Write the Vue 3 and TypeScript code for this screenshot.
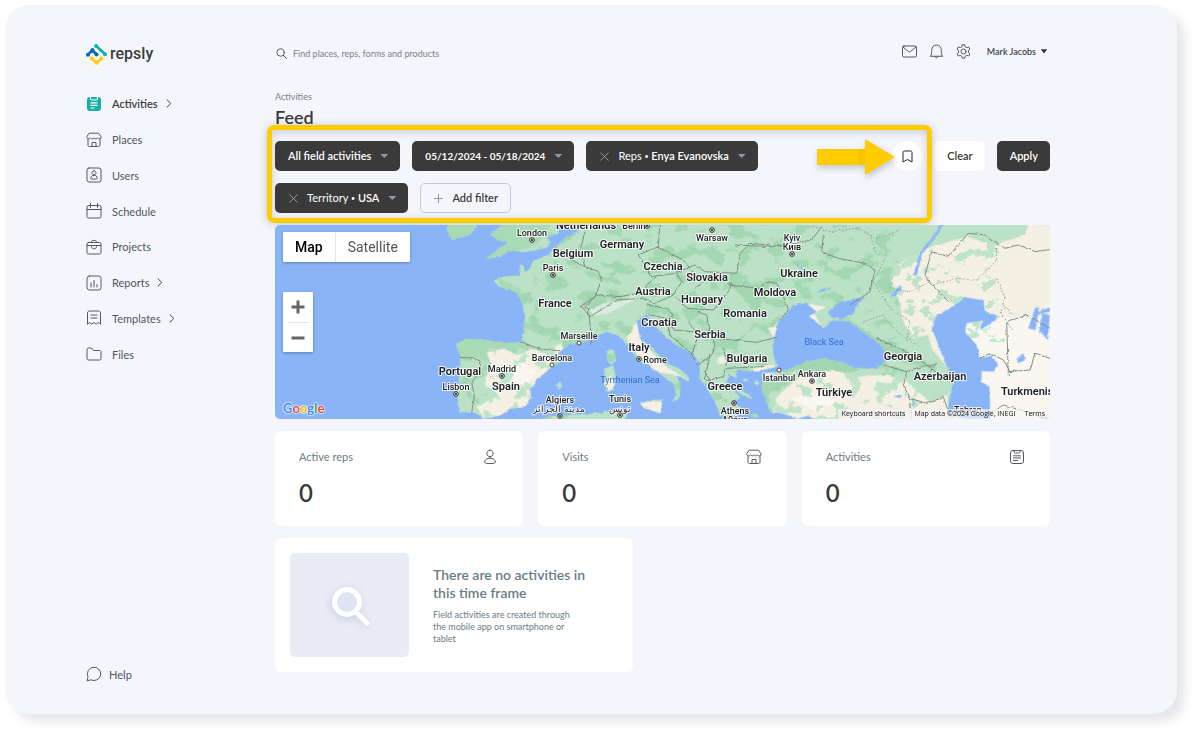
<script setup lang="ts">
import { ref } from 'vue'

interface NavItem {
  label: string
  icon: string
  expandable?: boolean
  active?: boolean
}

interface MapLabel {
  text: string
  x: number
  y: number
  kind: 'country' | 'city' | 'sea'
}

const nav: NavItem[] = [
  { label: 'Activities', icon: 'clipboard-solid', expandable: true, active: true },
  { label: 'Places', icon: 'store' },
  { label: 'Users', icon: 'badge' },
  { label: 'Schedule', icon: 'calendar' },
  { label: 'Projects', icon: 'case' },
  { label: 'Reports', icon: 'chart', expandable: true },
  { label: 'Templates', icon: 'template', expandable: true },
  { label: 'Files', icon: 'folder' },
]

const icons: Record<string, string> = {
  store:
    'M3.500 1.200h9L15.200 5c.3 2-2.800 2.500-3.800.8-.7 1.400-2.800 1.400-3.400 0-.6 1.400-2.700 1.400-3.400 0C3.600 7.500.5 7 .8 5zM2 7.200v5.800c0 .9.600 1.500 1.500 1.500h9c.9 0 1.500-.6 1.500-1.500V7.200M6 14.500V10.500h4v4',
  badge:
    'M3 1h10a2 2 0 0 1 2 2v10a2 2 0 0 1-2 2H3a2 2 0 0 1-2-2V3a2 2 0 0 1 2-2zM8 3.800a2 2 0 1 0 .01 0zM8 8c-2 0-3.300 1.800-3.300 3.500 0 .8 6.600.8 6.600 0C11.300 9.800 10 8 8 8z',
  calendar:
    'M2.500 2.500h11a1.500 1.500 0 0 1 1.500 1.500v9.500a1.500 1.500 0 0 1-1.500 1.500h-11A1.500 1.500 0 0 1 1 13.500V4a1.500 1.500 0 0 1 1.500-1.500zM1 6.500h14M4.500.5v4M11.500.5v4',
  case:
    'M2.500 3.500h11a1.500 1.500 0 0 1 1.500 1.500v8.500a1.500 1.500 0 0 1-1.500 1.500h-11A1.500 1.500 0 0 1 1 13.500V5a1.500 1.500 0 0 1 1.500-1.500zM5 3.500C5 .5 11 .5 11 3.500M1 6.500h14M5.500 6.500v1.200c0 2.800 5 2.800 5 0V6.500',
  chart:
    'M3.500 1h9A2.500 2.500 0 0 1 15 3.500v9a2.500 2.500 0 0 1-2.500 2.500h-9A2.500 2.500 0 0 1 1 12.500v-9A2.500 2.500 0 0 1 3.500 1zM5 8v4M8 5.500V12M11 9.500V12',
  template:
    'M1.500 14V3c0-1.200.8-2 2-2h9c1.200 0 2 .8 2 2v11l-2.200-1.500-2.100 1.700L8 12.500l-2.200 1.700-2.100-1.700zM5 5h6M5 8h6',
  folder:
    'M1 3.500C1 2.600 1.600 2 2.500 2h3l2 2.500h6c.9 0 1.500.6 1.500 1.500v6.500c0 .9-.6 1.500-1.500 1.500h-11C1.600 14 1 13.400 1 12.500z',
  clipboard:
    'M4 1.500h8A2.500 2.500 0 0 1 14.500 4v8a2.500 2.500 0 0 1-2.500 2.500H4A2.500 2.500 0 0 1 1.500 12V4A2.500 2.500 0 0 1 4 1.500zM5 1.500v1c0 1 .5 1.500 1.500 1.500h3c1 0 1.500-.5 1.500-1.500v-1M4.500 6.800h7M4.500 9h7M4.500 11.500h4',
  user:
    'M8 1.200a3.200 3.200 0 1 0 .01 0zM8 9c-3.200 0-5.200 2-5.400 4.300-.1 1.700 10.900 1.700 10.800 0C13.200 11 11.200 9 8 9z',
}

const stats = [
  { label: 'Active reps', value: 0, icon: 'user' },
  { label: 'Visits', value: 0, icon: 'store' },
  { label: 'Activities', value: 0, icon: 'clipboard' },
]

const labels: MapLabel[] = [
  { text: 'Netherlands', x: 311, y: 4, kind: 'country' },
  { text: 'Germany', x: 347, y: 23, kind: 'country' },
  { text: 'Belgium', x: 298, y: 32, kind: 'country' },
  { text: 'Czechia', x: 388, y: 45, kind: 'country' },
  { text: 'Slovakia', x: 432, y: 56, kind: 'country' },
  { text: 'Austria', x: 378, y: 70, kind: 'country' },
  { text: 'Hungary', x: 427, y: 78, kind: 'country' },
  { text: 'France', x: 280, y: 82, kind: 'country' },
  { text: 'Romania', x: 470, y: 92, kind: 'country' },
  { text: 'Croatia', x: 384, y: 101, kind: 'country' },
  { text: 'Serbia', x: 435, y: 113, kind: 'country' },
  { text: 'Italy', x: 364, y: 126, kind: 'country' },
  { text: 'Bulgaria', x: 472, y: 137, kind: 'country' },
  { text: 'Greece', x: 450, y: 165, kind: 'country' },
  { text: 'Portugal', x: 185, y: 150, kind: 'country' },
  { text: 'Spain', x: 231, y: 165, kind: 'country' },
  { text: 'Moldova', x: 500, y: 71, kind: 'country' },
  { text: 'Ukraine', x: 524, y: 52, kind: 'country' },
  { text: 'Georgia', x: 628, y: 135, kind: 'country' },
  { text: 'Azerbaijan', x: 665, y: 155, kind: 'country' },
  { text: 'Türkiye', x: 559, y: 171, kind: 'country' },
  { text: 'Turkmenistan', x: 760, y: 170, kind: 'country' },
  { text: 'London', x: 257, y: 11, kind: 'city' },
  { text: 'Berlin', x: 359, y: 4, kind: 'city' },
  { text: 'Warsaw', x: 437, y: 16, kind: 'city' },
  { text: 'Paris', x: 278, y: 46, kind: 'city' },
  { text: 'Kyiv', x: 517, y: 16, kind: 'city' },
  { text: 'Київ', x: 517, y: 25, kind: 'city' },
  { text: 'Marseille', x: 304, y: 114, kind: 'city' },
  { text: 'Barcelona', x: 277, y: 136, kind: 'city' },
  { text: 'Madrid', x: 227, y: 147, kind: 'city' },
  { text: 'Lisbon', x: 181, y: 165, kind: 'city' },
  { text: 'Rome', x: 380, y: 138, kind: 'city' },
  { text: 'Algiers', x: 285, y: 178, kind: 'city' },
  { text: 'مدينة الجزائر', x: 284, y: 187, kind: 'city' },
  { text: 'Tunis', x: 345, y: 177, kind: 'city' },
  { text: 'تونس', x: 345, y: 187, kind: 'city' },
  { text: 'Athens', x: 460, y: 189, kind: 'city' },
  { text: 'Αθήνα', x: 460, y: 198, kind: 'city' },
  { text: 'İstanbul', x: 504, y: 156, kind: 'city' },
  { text: 'Ankara', x: 537, y: 152, kind: 'city' },
  { text: 'Tehran', x: 693, y: 188, kind: 'city' },
  { text: 'Tyrrhenian Sea', x: 355, y: 158, kind: 'sea' },
  { text: 'Black Sea', x: 549, y: 120, kind: 'sea' },
]

const capitals = [
  [257, 15], [372, 1], [437, 5], [278, 50], [517, 29], [364, 134], [227, 151],
  [181, 169], [285, 191], [345, 190], [459, 178], [537, 156],
]
const towns = [[304, 118], [277, 140], [504, 145]]

const search = ref('')
</script>

<template>
  <div class="panel">
    <aside class="sidebar">
      <a class="logo" href="#" aria-label="repsly home">
        <svg width="21" height="21" viewBox="0 0 62 62" aria-hidden="true">
          <g fill="none" stroke-width="8" stroke-linecap="round" stroke-linejoin="round">
            <path d="M5 32 19 18 31 31" stroke="#0a6cb8" />
            <path d="M30 6 57 30" stroke="#0fb5a5" />
            <path d="M17 43 31 56 45 43" stroke="#ffcf0a" />
          </g>
          <g fill="#0a6cb8"><circle cx="6" cy="32" r="6" /><circle cx="19" cy="18" r="6" /><circle cx="31" cy="31" r="6" /></g>
          <g fill="#0fb5a5"><circle cx="30" cy="6" r="6" /><circle cx="43" cy="18" r="5" /><circle cx="56" cy="30" r="6" /></g>
          <g fill="#ffcf0a"><circle cx="17" cy="43" r="6" /><circle cx="45" cy="43" r="6" /><circle cx="31" cy="55" r="6" /></g>
        </svg>
        <span>repsly</span>
      </a>

      <nav>
        <ul class="nav">
          <li v-for="item in nav" :key="item.label">
            <a href="#" :class="['nav-link', { active: item.active }]">
              <svg v-if="item.icon === 'clipboard-solid'" width="16" height="16" viewBox="0 0 16 16" aria-hidden="true">
                <rect x="1" y="1" width="14" height="14" rx="3" fill="#12b0a4" />
                <path d="M4.500 1v1.500c0 1 .5 1.500 1.500 1.500h4c1 0 1.500-.5 1.500-1.500V1M4.500 6.800h7M4.500 9.300h7M4.500 12h4" fill="none" stroke="#fff" stroke-width="1.200" />
              </svg>
              <svg v-else class="line" width="16" height="16" viewBox="0 0 16 16" aria-hidden="true">
                <path :d="icons[item.icon]" />
              </svg>
              <span>{{ item.label }}</span>
              <svg v-if="item.expandable" class="line chevron" width="6" height="9" viewBox="0 0 6 9" aria-hidden="true">
                <path d="M1 .8 4.800 4.500 1 8.200" />
              </svg>
            </a>
          </li>
        </ul>
      </nav>

      <a class="help" href="#">
        <svg class="line" width="16" height="16" viewBox="0 0 16 16" aria-hidden="true">
          <path d="M1.200 14.600 2 10.800A6.700 6.700 0 1 1 5.200 14z" />
        </svg>
        <span>Help</span>
      </a>
    </aside>

    <main class="main">
      <header class="topbar">
        <label class="search">
          <svg class="line" width="11" height="11" viewBox="0 0 11 11" aria-hidden="true">
            <circle cx="4.500" cy="4.500" r="3.700" />
            <path d="M7.200 7.200 10.500 10.500" />
          </svg>
          <input v-model="search" type="search" aria-label="Search" placeholder="Find places, reps, forms and products" />
        </label>
        <div class="tools">
          <button type="button" class="tool" aria-label="Messages">
            <svg class="line" width="15" height="15" viewBox="0 0 15 15" aria-hidden="true">
              <path d="M2 2h11a1.500 1.500 0 0 1 1.500 1.500v8A1.500 1.500 0 0 1 13 13H2a1.500 1.500 0 0 1-1.500-1.500v-8A1.500 1.500 0 0 1 2 2zM1 3l5.200 4.300c.8.6 1.800.6 2.600 0L14 3" />
            </svg>
          </button>
          <button type="button" class="tool" aria-label="Notifications">
            <svg class="line" width="15" height="15" viewBox="0 0 15 15" aria-hidden="true">
              <path d="M1.500 12c1-1 1.200-2.300 1.200-5.500C2.700 3.200 4.500 1 7.500 1s4.800 2.200 4.800 5.500c0 3.200.2 4.500 1.200 5.500zM6 12.500c.2 1.700 2.800 1.700 3 0" />
            </svg>
          </button>
          <button type="button" class="tool" aria-label="Settings">
            <svg class="line" width="15" height="15" viewBox="0 0 15 15" aria-hidden="true">
              <circle cx="7.500" cy="7.500" r="2.500" />
              <path d="M6.300.8h2.400l.5 2 1.500.8 2-.6 1.200 2-1.400 1.500v2l1.400 1.500-1.200 2-2-.6-1.500.8-.5 2H6.300l-.5-2-1.500-.8-2 .6-1.200-2 1.400-1.500v-2L1.100 5l1.200-2 2 .6 1.500-.8z" />
            </svg>
          </button>
          <button type="button" class="account">
            Mark Jacobs
            <svg width="8" height="5" viewBox="0 0 8 5" aria-hidden="true"><path d="M.8.3h6.400L4 4.500z" fill="#333" /></svg>
          </button>
        </div>
      </header>

      <div class="heading">
        <a href="#" class="crumb">Activities</a>
        <h1>Feed</h1>
      </div>

      <div class="filter-bar">
        <div class="filters">
          <div class="filter-list">
            <button type="button" class="chip">
              <b>All field activities</b>
              <span class="caret" />
            </button>
            <button type="button" class="chip dates">
              <b>05/12/2024 - 05/18/2024</b>
              <span class="caret" />
            </button>
            <button type="button" class="chip removable">
              <svg class="cross" width="9" height="9" viewBox="0 0 9 9" aria-hidden="true"><path d="M.5.5l8 8M8.500.5l-8 8" /></svg>
              <span>Reps <small>•</small> <b>Enya Evanovska</b></span>
              <span class="caret" />
            </button>
            <button type="button" class="chip removable">
              <svg class="cross" width="9" height="9" viewBox="0 0 9 9" aria-hidden="true"><path d="M.5.5l8 8M8.500.5l-8 8" /></svg>
              <span>Territory <small>•</small> <b>USA</b></span>
              <span class="caret" />
            </button>
            <button type="button" class="chip add">
              <svg class="cross" width="9" height="9" viewBox="0 0 9 9" aria-hidden="true"><path d="M4.500 0v9M0 4.500h9" /></svg>
              <b>Add filter</b>
            </button>
          </div>
          <button type="button" class="bookmark" aria-label="Save filter">
            <svg width="11" height="13" viewBox="0 0 11 13" aria-hidden="true">
              <path d="M1 12V2.500C1 1.600 1.600 1 2.500 1h6c.9 0 1.500.6 1.500 1.500V12L5.500 9.500z" fill="none" stroke="#222" stroke-width="1" />
            </svg>
          </button>
          <svg class="arrow" width="78" height="36" viewBox="0 0 78 36" aria-hidden="true">
            <path d="M0 10h48v16H0z" fill="#ffcc00" />
            <path d="M41 10h7v16h-7z" fill="#eebf00" opacity=".6" />
            <path d="M48 0 78 18 48 36z" fill="#ffcc00" />
          </svg>
        </div>
        <button type="button" class="chip clear">Clear</button>
        <button type="button" class="chip apply">Apply</button>
      </div>

      <section class="map" aria-label="Map">
        <svg class="map-art" viewBox="0 0 775 194" preserveAspectRatio="xMidYMid slice" aria-hidden="true">
          <defs>
            <filter id="forest" x="0" y="0" width="100%" height="100%" color-interpolation-filters="sRGB">
              <feTurbulence type="fractalNoise" baseFrequency=".016 .022" numOctaves="4" seed="7" />
              <feColorMatrix values="0 0 0 0 .635  0 0 0 0 .845  0 0 0 0 .7  16 0 0 0 -8.900" />
            </filter>
            <filter id="steppe" x="0" y="0" width="100%" height="100%" color-interpolation-filters="sRGB">
              <feTurbulence type="fractalNoise" baseFrequency=".022 .03" numOctaves="4" seed="21" />
              <feColorMatrix values="0 0 0 0 .73  0 0 0 0 .886  0 0 0 0 .776  0 18 0 0 -10.300" />
            </filter>
            <filter id="rough" x="-5%" y="-5%" width="110%" height="110%" color-interpolation-filters="sRGB">
              <feTurbulence type="fractalNoise" baseFrequency=".07" numOctaves="3" seed="3" result="n" />
              <feDisplacementMap in="SourceGraphic" in2="n" scale="9" xChannelSelector="R" yChannelSelector="G" />
            </filter>
            <clipPath id="land">
              <path d="M930 20 928 45 890 65 855 95 835 120 790 137 780 158 765 172 760 152 746 148 750 182 705 183 670 197 688 215 740 232 758 270 764 310 760 345 755 378 720 385 640 375 590 371 558 386 570 425 570 470 561 540 568 590 600 592 615 590 640 610 690 602 720 580 765 576 783 545 780 525 800 495 845 458 872 440 866 412 900 385 930 385 960 370 1010 350 1050 365 1080 400 1102 435 1150 462 1185 488 1210 505 1218 540 1205 562 1230 545 1230 510 1220 480 1255 500 1258 488 1230 462 1180 440 1150 402 1110 372 1100 320 1130 297 1145 320 1190 370 1270 420 1290 445 1288 490 1310 520 1335 560 1350 600 1390 612 1400 590 1430 590 1392 560 1410 548 1370 505 1375 475 1400 490 1400 465 1450 470 1490 462 1520 455 1508 410 1512 370 1525 320 1550 295 1570 268 1610 265 1640 290 1620 303 1660 340 1690 315 1740 320 1770 345 1820 380 1840 400 1855 430 1820 460 1760 460 1710 440 1660 430 1610 440 1560 462 1530 470 1480 475 1475 520 1490 560 1500 590 1540 595 1580 612 1620 600 1630 620 2350 620 2350 20z" />
              <path d="M705 20 660 60 690 76 715 82 680 105 648 132 690 125 720 105 760 112 800 105 832 98 842 80 828 68 866 55 870 20z" />
              <path d="M535 20 530 47 545 74 600 60 630 20z" />
              <path d="M1012 408 1032 402 1036 440 1020 448 1010 430zM1002 462 1030 450 1038 480 1032 525 1008 532 1003 490zM1108 562 1180 552 1172 595 1120 578zM855 510 870 500 878 512 866 520zM780 625 840 602 950 597 1040 588 1072 600 1060 625z" />
              <path d="M1400 520l30 12 20 22-20-8-28-14zM1452 500l12-4 4 12-12 2zM1440 600l20-6 6 10-20 6zM1420 490l14 2-2 8-12-2z" />
            </clipPath>
          </defs>
          <rect width="775" height="194" fill="#8ab4f8" />
          <g transform="translate(-5 -10) scale(.33333)">
            <g filter="url(#rough)">
              <g clip-path="url(#land)">
                <rect x="400" width="1960" height="640" fill="#bbe2c6" />
                <rect x="400" y="20" width="1500" height="600" filter="url(#forest)" />
                <path d="M555 372h200l40 30-90 5-60 40-70-10zM670 180l80 40 15 80-20-20zM530 20h130v50H530zM640 20h210l-50 70-170 50z" fill="#a8dab5" />
                <path d="M1390 210l40-20 40 60 15 70-40-50-20-10zM1740 315l90 60 130 60 40 30-90-20-80-30-90-50zM1550 460l110-35 110 40-60 15z" fill="#a3d6b0" />
                <g fill="#f5f0e4">
                  <path d="M650 412 700 400 740 420 790 400 840 425 850 450 800 495 770 580 720 585 690 602 640 610 622 575 685 540 640 505 665 455z" />
                  <path d="M1100 320l20 60 50 60 80 55-40-15-50-10-60-50-30-50zM1495 340l30-15 10 30-20 20zM1002 500l20-20 14 30-20 20z" />
                  <path d="M1110 560h80v40h-80zM1340 430l20-8 10 20-25 5zM1450 455l60-5 20 10-40 25-40-10z" />
                  <path d="M1520 545 1590 485 1680 465 1770 485 1850 478 1910 500 1980 560 2030 540 2040 625 1500 625z" />
                  <path d="M1970 100 2090 65 2170 90 2265 60 2275 20 2350 20 2350 625 2050 625 2050 480 1985 400 1975 360 1930 370 1900 320 1885 250 1865 200 1880 150z" />
                  <path d="M1600 265l70 10-40 20 30 45-20 5-30-40-30-20zM850 395l25-10 5 25-20 10z" />
                </g>
                <path d="M2080 320 2200 310 2350 300 2350 625 2140 625 2080 400zM700 470l60-30 40 30-50 60-50-10zM1560 550l80-20 60 30-60 30z" fill="#faf7f1" />
                <g opacity=".9">
                  <rect x="600" y="400" width="250" height="220" filter="url(#steppe)" />
                  <rect x="1500" y="470" width="500" height="150" filter="url(#steppe)" />
                  <rect x="1860" y="30" width="340" height="350" filter="url(#steppe)" />
                </g>
                <path d="M960 285l40-20 70-10 20-15 10 12-30 15-60 30-40 5z" fill="#dcebdd" />
              </g>
              <g fill="#8ab4f8">
                <path d="M1675 290 1710 262 1790 245 1765 265 1745 300 1710 312 1680 303zM1640 232l22-12 28-2-30 12zM1860 250l14-24 16-16 6 6-20 28zM1930 180l20-70 50-60 12-25 6 3-12 28-50 60-15 65z" />
                <path d="M2040 280 2085 248 2140 255 2145 290 2180 300 2180 315 2130 345 2140 315 2090 325 2085 350 2120 390 2130 430 2165 422 2185 450 2170 470 2135 468 2135 500 2158 515 2162 625 2035 600 2035 570 2050 500 2020 430 2005 390 1985 340 2000 300z" />
                <path d="M2275 340l20-60 12-5-10 70zM2305 345l12-50 22 5-5 75zM2300 290l40-12v12l-36 8zM2240 430l20-15 5 20-20 10zM1570 140l40 30-5 4zM1925 540l10 30-6 6zM1870 545l25-8-5 12z" />
              </g>
            </g>
            <g class="borders" filter="url(#rough)">
              <path d="M568 428h40l22 10-5 35-20 30 8 40-8 50M750 380l60 22 60 5M855 95l50 40 40 20 40 15 10 25-20 50-45 30 25 5 5 50 5 60M945 50l-15 60 15 45M1170 20l-5 75-60 25 40 65 70-10 60-25 30 20 95 5 10-60 30-30 60 5M1115 250l15-40 30-25M1115 250l-75 5-80 50-20-25 40-40 70 5 50-10M1115 250l40 15 55-25 25-40-15-25M1220 245l30 35 80 5 45-55 10-25-70-15-40 30M1375 210l95 10 20-20 30 5 25 50 10 30-25 30M1280 290l30 10 10 50 15 40-10 30-40 30-20-30 20-60-30-40M1130 270l60 10 20 20-15 10-60-10M1190 310l20 35 60 5M1190 310l10 50 70 60M1340 370l120 12 60-15M1360 400l10 40-10 45-40 10-20-30M1370 460l110-5M1320 420l-15 70 20 15M1160 95l80 40 40 50" />
              <path d="M1395 90l110 5 70-10 50-10 30-40M1660 60l-5 50 50 20 80 15 30 20-15 65-60 40M1985 210l-20-30 20-70 50 15 60-70 50 5 60 40 40-10 50 20 75-10M1820 370l80 35 80 50 20-10-40 50M1840 450l70 20 60-20 40 30M1910 470l-10 40 20 40 50 15 50-20 20 60M1920 565l5 50M2215 480l-5-160 60-20 80 45M2130 430l30-15 40 20 20 35 60-5 15-50 45 15 10 30M2150 600l50-30 70 20 70 25M1990 210l45 50" />
              <path class="dashed" d="M1620 30l60 20 80-10 60 30 60-20M1820 120l-20-60M1850 120l-40 80 50 80 60 40-10 60M1860 220l60 10 60-30M1990 210l70-20 60 5 60-60 0-60M2180 190l25 60-15 40 40 60M1780 320l60-20 40 50 60 40M2200 270l30 30" />
            </g>
          </g>
          <g class="labels">
            <text v-for="l in labels" :key="l.text + l.x" :x="l.x" :y="l.y" :class="l.kind">{{ l.text }}</text>
          </g>
          <g v-for="c in capitals" :key="c.join()">
            <circle :cx="c[0]" :cy="c[1]" r="2.300" fill="#fff" stroke="#222" />
            <circle :cx="c[0]" :cy="c[1]" r="1.100" fill="#222" />
          </g>
          <circle v-for="c in towns" :key="c.join()" :cx="c[0]" :cy="c[1]" r="2" fill="#fff" stroke="#444" />
        </svg>

        <div class="map-type">
          <button type="button" class="selected">Map</button>
          <button type="button">Satellite</button>
        </div>
        <div class="map-zoom">
          <button type="button" aria-label="Zoom in">
            <svg width="14" height="14" viewBox="0 0 14 14" aria-hidden="true"><path d="M7 .5v13M.5 7h13" /></svg>
          </button>
          <button type="button" aria-label="Zoom out">
            <svg width="14" height="14" viewBox="0 0 14 14" aria-hidden="true"><path d="M.5 7h13" /></svg>
          </button>
        </div>
        <a class="google" href="#" aria-label="Google"><span class="b">G</span><span class="r">o</span><span class="y">o</span><span class="b">g</span><span class="g">l</span><span class="r">e</span></a>
        <div class="attribution">
          <button type="button">Keyboard shortcuts</button>
          <span>Map data ©2024 Google, INEGI</span>
          <a href="#">Terms</a>
        </div>
      </section>

      <section class="stats">
        <article v-for="s in stats" :key="s.label" class="card stat">
          <div class="stat-head">
            <h2>{{ s.label }}</h2>
            <svg class="line" width="16" height="16" viewBox="0 0 16 16" aria-hidden="true"><path :d="icons[s.icon]" /></svg>
          </div>
          <p>{{ s.value }}</p>
        </article>
      </section>

      <section class="card empty">
        <div class="empty-art">
          <svg width="60" height="60" viewBox="0 0 60 60" aria-hidden="true">
            <path d="M36 37 47 48" fill="none" stroke="#fff" stroke-width="5" stroke-linecap="round" />
            <circle cx="27" cy="27" r="12.500" fill="#dfe5f2" stroke="#fff" stroke-width="5" />
          </svg>
        </div>
        <div class="empty-text">
          <h2>There are no activities in this time frame</h2>
          <p>Field activities are created through the mobile app on smartphone or tablet</p>
        </div>
      </section>
    </main>
  </div>
</template>

<style>
body {
  background: #fff;
}
</style>

<style scoped>
* {
  box-sizing: border-box;
}

.panel {
  display: grid;
  grid-template-columns: 189px minmax(0, 1fr);
  min-height: calc(100vh - 30px);
  margin: 5px 25px 25px 5px;
  padding: 0 127px 0 81px;
  border-radius: 24px;
  background: #f5f6fc;
  box-shadow: 8px 8px 10px rgba(40, 45, 60, 0.11);
  color: #3a3a3a;
  font-family: Lato, 'Liberation Sans', sans-serif;
  font-size: 11px;
}

button {
  padding: 0;
  border: 0;
  background: none;
  color: inherit;
  font: inherit;
  cursor: pointer;
}

a {
  color: inherit;
  text-decoration: none;
}

h1,
h2,
p,
ul {
  margin: 0;
  padding: 0;
}

svg {
  display: block;
  flex: none;
}

.line {
  fill: none;
  stroke: #55585c;
  stroke-width: 1;
  stroke-linejoin: round;
  stroke-linecap: round;
}

.sidebar {
  display: flex;
  flex-direction: column;
  padding: 38px 0 31px;
}

.logo {
  display: flex;
  align-items: center;
  gap: 3px;
  height: 22px;
  color: #3c3c3c;
  font: 500 16px/20px Roboto, sans-serif;
}

.nav {
  display: grid;
  grid-auto-rows: 1fr;
  height: 286px;
  margin-top: 21px;
  list-style: none;
}

.nav-link {
  display: flex;
  align-items: center;
  height: 100%;
  gap: 10px;
  color: #4e565d;
}

.nav-link.active {
  color: #3a3a3a;
  font-weight: 600;
}

.chevron {
  margin-left: -2px;
  stroke: #3f4347;
}

.help {
  display: flex;
  align-items: center;
  gap: 7px;
  height: 18px;
  margin-top: auto;
  color: #4e565d;
}

.main {
  padding: 35px 0 42px;
}

.topbar {
  display: flex;
  align-items: center;
  height: 22px;
  padding-right: 2px;
}

.search {
  display: flex;
  align-items: center;
  flex: 1;
  gap: 6px;
  padding: 5px 0 0 1px;
}

.search input {
  width: 240px;
  padding: 0;
  border: 0;
  outline: 0;
  background: none;
  font: 9px/14px Lato, 'Liberation Sans', sans-serif;
}

.search input::placeholder {
  color: #75828d;
  opacity: 1;
}

.tools {
  display: flex;
  align-items: center;
  gap: 12px;
}

.account {
  display: flex;
  align-items: center;
  gap: 4px;
  margin-left: 4px;
  color: #333;
  font-size: 9px;
  font-weight: 500;
}

.heading {
  margin-top: 29px;
}

.crumb {
  display: block;
  color: #75828d;
  font-size: 9px;
  line-height: 12px;
}

h1 {
  margin-top: 2px;
  font-size: 18px;
  line-height: 24px;
  font-weight: 600;
}

.filter-bar {
  display: flex;
  align-items: flex-start;
  gap: 12px;
  margin-top: 12px;
}

.filters {
  position: relative;
  display: flex;
  flex: 1;
  align-items: flex-start;
  gap: 12px;
}

.filters::after {
  content: '';
  position: absolute;
  inset: -16px -10px -10px -8px;
  border: 5px solid #ffcc00;
  border-radius: 7px;
  box-shadow: 0 1px 8px rgba(40, 50, 80, 0.25), inset 0 2px 9px rgba(40, 50, 80, 0.22);
  pointer-events: none;
}

.filter-list {
  display: flex;
  flex: 1;
  flex-wrap: wrap;
  gap: 12px;
}

.chip {
  display: flex;
  align-items: center;
  height: 30px;
  padding: 0 12px 0 13px;
  border-radius: 5px;
  background: #3a3a3a;
  color: #fff;
  font-size: 11px;
  line-height: 14px;
  white-space: nowrap;
}

.chip b {
  font-weight: 600;
}

.dates {
  font-size: 10px;
}

.dates b {
  font-weight: 700;
}

.chip small {
  font-size: 7px;
  vertical-align: 1px;
}

.removable {
  padding-left: 14px;
}

.cross {
  margin-right: 9px;
  fill: none;
  stroke: #9296a5;
}

.caret {
  width: 8px;
  height: 4px;
  margin-left: 9px;
  background: #9296a5;
  clip-path: polygon(0 0, 100% 0, 50% 100%);
}

.add {
  border: 1px solid #c5c9de;
  background: transparent;
  color: #3a3a3a;
}

.bookmark {
  display: grid;
  place-items: center;
  width: 30px;
  height: 30px;
  border-radius: 50%;
  background: #fff;
}

.arrow {
  position: absolute;
  top: -2px;
  right: 27px;
  filter: drop-shadow(1px 3px 3px rgba(40, 50, 80, 0.25));
  pointer-events: none;
}

.clear,
.apply {
  font-weight: 600;
}

.clear {
  background: #fff;
  color: #3a3a3a;
}

.map {
  position: relative;
  height: 194px;
  margin-top: 12px;
  border-radius: 5px;
  overflow: hidden;
  font-family: Roboto, 'Liberation Sans', sans-serif;
}

.map-art {
  width: 100%;
  height: 100%;
}

.borders {
  fill: none;
  stroke: #7f8f86;
  stroke-width: 3;
}

.dashed {
  stroke: #94a39a;
  stroke-dasharray: 5 5;
}

.labels text {
  fill: #202124;
  stroke: #fff;
  stroke-width: 2px;
  stroke-linejoin: round;
  stroke-opacity: 0.85;
  paint-order: stroke;
  text-anchor: middle;
}

.labels .country {
  font-size: 11px;
  font-weight: 600;
}

.labels .city {
  font-size: 9px;
  font-weight: 500;
}

.labels .sea {
  fill: #2f6fd0;
  stroke: none;
  font-size: 9px;
}

.map-type {
  position: absolute;
  top: 7px;
  left: 8px;
  display: flex;
  border-radius: 1px;
  background: #fff;
  box-shadow: 0 1px 3px rgba(0, 0, 0, 0.3);
  color: #565656;
  font-size: 14px;
}

.map-type button {
  height: 30px;
  padding: 0 12px;
}

.map-type .selected {
  border-right: 1px solid #e6e6e6;
  color: #000;
  font-weight: 500;
}

.map-zoom {
  position: absolute;
  top: 67px;
  left: 8px;
  width: 30px;
  padding: 0 4px;
  background: #fff;
  box-shadow: 0 1px 3px rgba(0, 0, 0, 0.3);
}

.map-zoom button {
  display: grid;
  place-items: center;
  width: 100%;
  height: 30px;
}

.map-zoom button + button {
  border-top: 1px solid #e6e6e6;
}

.map-zoom path {
  fill: none;
  stroke: #666;
  stroke-width: 3;
}

.google {
  position: absolute;
  bottom: 2px;
  left: 8px;
  font: 700 13px/18px Lato, sans-serif;
  text-shadow: 0 0 1px #fff, 0 0 1px #fff, 0 0 2px #fff, 0 0 2px #fff;
}

.b {
  color: #4285f4;
}

.r {
  color: #ea4335;
}

.y {
  color: #fbbc04;
}

.g {
  color: #34a853;
}

.attribution {
  position: absolute;
  right: 0;
  bottom: 0;
  display: flex;
  gap: 9px;
  padding: 0 5px 0 4px;
  background: rgba(245, 245, 245, 0.7);
  color: #111;
  font: 500 7px/10px 'Open Sans', sans-serif;
}

.card {
  border-radius: 6px;
  background: #fff;
}

.stats {
  display: grid;
  grid-template-columns: repeat(3, 1fr);
  gap: 15px;
  margin-top: 12px;
}

.stat {
  padding: 17px 25px 18px 24px;
}

.stat-head {
  display: flex;
  align-items: center;
  justify-content: space-between;
}

.stat h2 {
  color: #6d7a84;
  font-size: 11px;
  line-height: 18px;
  font-weight: 400;
}

.stat p {
  margin-top: 12px;
  font-size: 24px;
  line-height: 30px;
  font-weight: 600;
}

.empty {
  display: flex;
  align-items: center;
  gap: 24px;
  width: 358px;
  margin-top: 12px;
  padding: 15px;
}

.empty-art {
  display: grid;
  place-items: center;
  width: 119px;
  height: 104px;
  border-radius: 5px;
  background: #e9ecf5;
}

.empty-art svg {
  filter: drop-shadow(-1px 2px 4px rgba(60, 80, 130, 0.2));
}

.empty-text {
  width: 160px;
  color: #6b7b86;
}

.empty h2 {
  font-size: 14px;
  line-height: 18px;
  font-weight: 600;
}

.empty p {
  max-width: 145px;
  margin-top: 7px;
  font-size: 9px;
  line-height: 12px;
}
</style>
